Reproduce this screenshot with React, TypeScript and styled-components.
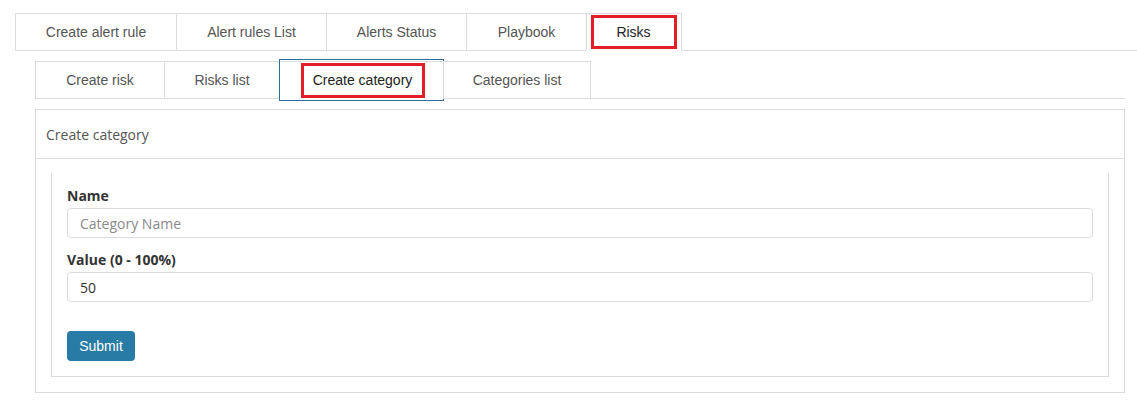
import React from "react";
import styled, { createGlobalStyle } from "styled-components";

const Global = createGlobalStyle`
  html, body { margin: 0; padding: 0; background: #fff; }
  body { font-family: "Liberation Sans", Arial, sans-serif; }
  * { box-sizing: border-box; }
`;

const Page = styled.div`
  width: 1137px;
  height: 412px;
  padding-top: 13px;
  overflow: hidden;
`;

const TabBar = styled.ul<{ $left: number; $right: number }>`
  display: flex;
  list-style: none;
  margin: 0 ${(p) => p.$right}px 0 ${(p) => p.$left}px;
  padding: 0;
  border-bottom: 1px solid #dcdcdc;
  height: 38px;
`;

const Tab = styled.li<{ $w: number; $active?: boolean; $outlined?: boolean }>`
  position: relative;
  width: ${(p) => p.$w}px;
  height: 38px;
  margin-right: -1px;
  margin-bottom: -1px;
  border: 1px solid #dcdcdc;
  border-bottom-color: ${(p) => (p.$active ? "#fff" : "#dcdcdc")};
  background: #fff;
  display: flex;
  align-items: center;
  justify-content: center;
  font-family: "Liberation Sans", Arial, sans-serif;
  font-size: 14px;
  color: ${(p) => (p.$active ? "#222" : "#555")};
  ${(p) =>
    p.$outlined
      ? `&::after {
    content: "";
    position: absolute;
    left: -1px;
    right: -1px;
    top: -3px;
    bottom: -3px;
    border: 1px solid #2d6f96;
    pointer-events: none;
  }`
      : ""}
`;

const Highlight = styled.span<{ $w: number; $h: number; $dx?: number }>`
  display: flex;
  align-items: center;
  justify-content: center;
  width: ${(p) => p.$w}px;
  height: ${(p) => p.$h}px;
  margin-left: ${(p) => p.$dx ?? 0}px;
  border: 3px solid #e21f26;
  color: #222;
`;

const SubBar = styled(TabBar)`
  margin-top: 10px;
`;

const Panel = styled.section`
  margin: 10px 12px 0 35px;
  border: 1px solid #dcdcdc;
`;

const PanelHeader = styled.div`
  height: 49px;
  border-bottom: 1px solid #dcdcdc;
  padding-left: 10px;
  display: flex;
  align-items: center;
  font-family: "Open Sans", sans-serif;
  font-size: 14px;
  color: #555;
`;

const PanelBody = styled.div`
  padding: 14px 15px 15px 15px;
`;

const FormBox = styled.form`
  border: 1px solid #dcdcdc;
  border-top: none;
  padding: 13px 15px 15px 15px;
  display: flex;
  flex-direction: column;
`;

const Label = styled.label<{ $mt?: number }>`
  font-family: "Open Sans", sans-serif;
  font-weight: 700;
  font-size: 14px;
  line-height: 20px;
  color: #333;
  margin-top: ${(p) => p.$mt ?? 0}px;
  margin-bottom: 2px;
`;

const Input = styled.input`
  height: 30px;
  width: 100%;
  border: 1px solid #dcdcdc;
  border-radius: 4px;
  padding: 0 12px;
  font-family: "Open Sans", sans-serif;
  font-size: 14px;
  color: #333;
  outline: none;
  &::placeholder { color: #8a8a8a; }
`;

const SubmitButton = styled.button`
  align-self: flex-start;
  margin-top: 29px;
  height: 30px;
  width: 68px;
  border: none;
  border-radius: 4px;
  background: #287ba5;
  color: #fff;
  font-family: "Liberation Sans", Arial, sans-serif;
  font-size: 14px;
  padding: 0;
`;

const mainTabs = [
  { label: "Create alert rule", w: 162 },
  { label: "Alert rules List", w: 151 },
  { label: "Alerts Status", w: 141 },
  { label: "Playbook", w: 121 },
  { label: "Risks", w: 96, active: true },
];

const subTabs = [
  { label: "Create risk", w: 130 },
  { label: "Risks list", w: 116 },
  { label: "Create category", w: 165, active: true },
  { label: "Categories list", w: 148 },
];

export default function App() {
  return (
    <Page>
      <Global />
      <TabBar $left={15} $right={0}>
        {mainTabs.map((t) => (
          <Tab key={t.label} $w={t.w} $active={t.active}>
            {t.active ? <Highlight $w={86} $h={34} $dx={-1}>{t.label}</Highlight> : t.label}
          </Tab>
        ))}
      </TabBar>
      <SubBar $left={35} $right={12}>
        {subTabs.map((t) => (
          <Tab key={t.label} $w={t.w} $active={t.active} $outlined={t.active}>
            {t.active ? <Highlight $w={124} $h={35} $dx={2}>{t.label}</Highlight> : t.label}
          </Tab>
        ))}
      </SubBar>
      <Panel>
        <PanelHeader>Create category</PanelHeader>
        <PanelBody>
          <FormBox onSubmit={(e) => e.preventDefault()}>
            <Label>Name</Label>
            <Input placeholder="Category Name" />
            <Label $mt={12}>Value (0 - 100%)</Label>
            <Input defaultValue="50" />
            <SubmitButton type="submit">Submit</SubmitButton>
          </FormBox>
        </PanelBody>
      </Panel>
    </Page>
  );
}
